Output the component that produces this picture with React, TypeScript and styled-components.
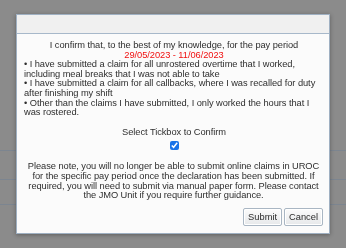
import * as React from "react";
import styled, { createGlobalStyle } from "styled-components";

const GlobalStyle = createGlobalStyle`
  html, body {
    margin: 0;
    padding: 0;
    width: 346px;
    height: 248px;
    overflow: hidden;
    background: #8b8b8b;
    font-family: "Liberation Sans", Arial, sans-serif;
  }
`;

const Page = styled.div`
  width: 346px;
  height: 248px;
  background: #8b8b8b;
`;

const BgRow = styled.div<{ h: number }>`
  height: ${(p) => p.h}px;
  border-bottom: 1px solid #7c8590;
  box-sizing: border-box;
`;

const Overlay = styled.div`
  position: fixed;
  inset: 0;
  display: flex;
  align-items: flex-start;
  padding: 14px 0 0 16px;
`;

const Dialog = styled.div`
  width: 314px;
  box-sizing: border-box;
  background: #fbfbfb;
  border: 1px solid #9fb0c2;
  box-shadow: 0 1px 4px rgba(40, 40, 40, 0.45);
  display: flex;
  flex-direction: column;
`;

const DialogHeader = styled.div`
  height: 18px;
  background: #f0f0f0;
  border-bottom: 1px solid #a7b8ca;
`;

const DialogBody = styled.div`
  padding: 7px 4px 7px 6px;
  color: #2e2e2e;
  font-size: 9.3px;
  line-height: 9.6px;
  letter-spacing: -0.06px;
  display: flex;
  flex-direction: column;
`;

const Centered = styled.div`
  text-align: center;
`;

const Period = styled.div`
  text-align: center;
  color: #f01010;
`;

const Bullet = styled.div`
  text-align: left;
  padding-left: 1px;
`;

const ConfirmBlock = styled.div`
  margin-top: 10px;
  display: flex;
  flex-direction: column;
  align-items: center;
  gap: 4px;
`;

const Tick = styled.input`
  width: 9px;
  height: 9px;
  margin: 0;
  accent-color: #1a73e8;
`;

const Note = styled.div`
  margin-top: 12px;
  padding-right: 1px;
  text-align: center;
`;

const Actions = styled.div`
  margin-top: 7px;
  margin-right: 2px;
  display: flex;
  justify-content: flex-end;
  gap: 2px;
`;

const Button = styled.button`
  height: 18px;
  padding: 0 4px;
  font-family: "Liberation Sans", Arial, sans-serif;
  font-size: 9.3px;
  color: #2a2a2a;
  background: linear-gradient(#fbfbfb, #e6e8ea);
  border: 1px solid #a9b6c3;
  border-radius: 2px;
  box-shadow: inset 0 0 0 1px #ffffff;
`;

export default function App() {
  const [checked, setChecked] = React.useState(true);

  return (
    <>
      <GlobalStyle />
      <Page>
        <BgRow h={151} />
        <BgRow h={29} />
        <BgRow h={25} />
      </Page>
      <Overlay>
        <Dialog>
          <DialogHeader />
          <DialogBody>
            <Centered>
              I confirm that, to the best of my knowledge, for the pay period
            </Centered>
            <Period>29/05/2023 - 11/06/2023</Period>
            <Bullet>
              • I have submitted a claim for all unrostered overtime that I
              worked, including meal breaks that I was not able to take
            </Bullet>
            <Bullet>
              • I have submitted a claim for all callbacks, where I was recalled
              for duty after finishing my shift
            </Bullet>
            <Bullet>
              • Other than the claims I have submitted, I only worked the hours
              that I was rostered.
            </Bullet>
            <ConfirmBlock>
              <span>Select Tickbox to Confirm</span>
              <Tick
                type="checkbox"
                checked={checked}
                onChange={() => setChecked(!checked)}
              />
            </ConfirmBlock>
            <Note>
              Please note, you will no longer be able to submit online claims in
              UROC for the specific pay period once the declaration has been
              submitted. If required, you will need to submit via manual paper
              form. Please contact the JMO Unit if you require further guidance.
            </Note>
            <Actions>
              <Button>Submit</Button>
              <Button>Cancel</Button>
            </Actions>
          </DialogBody>
        </Dialog>
      </Overlay>
    </>
  );
}
